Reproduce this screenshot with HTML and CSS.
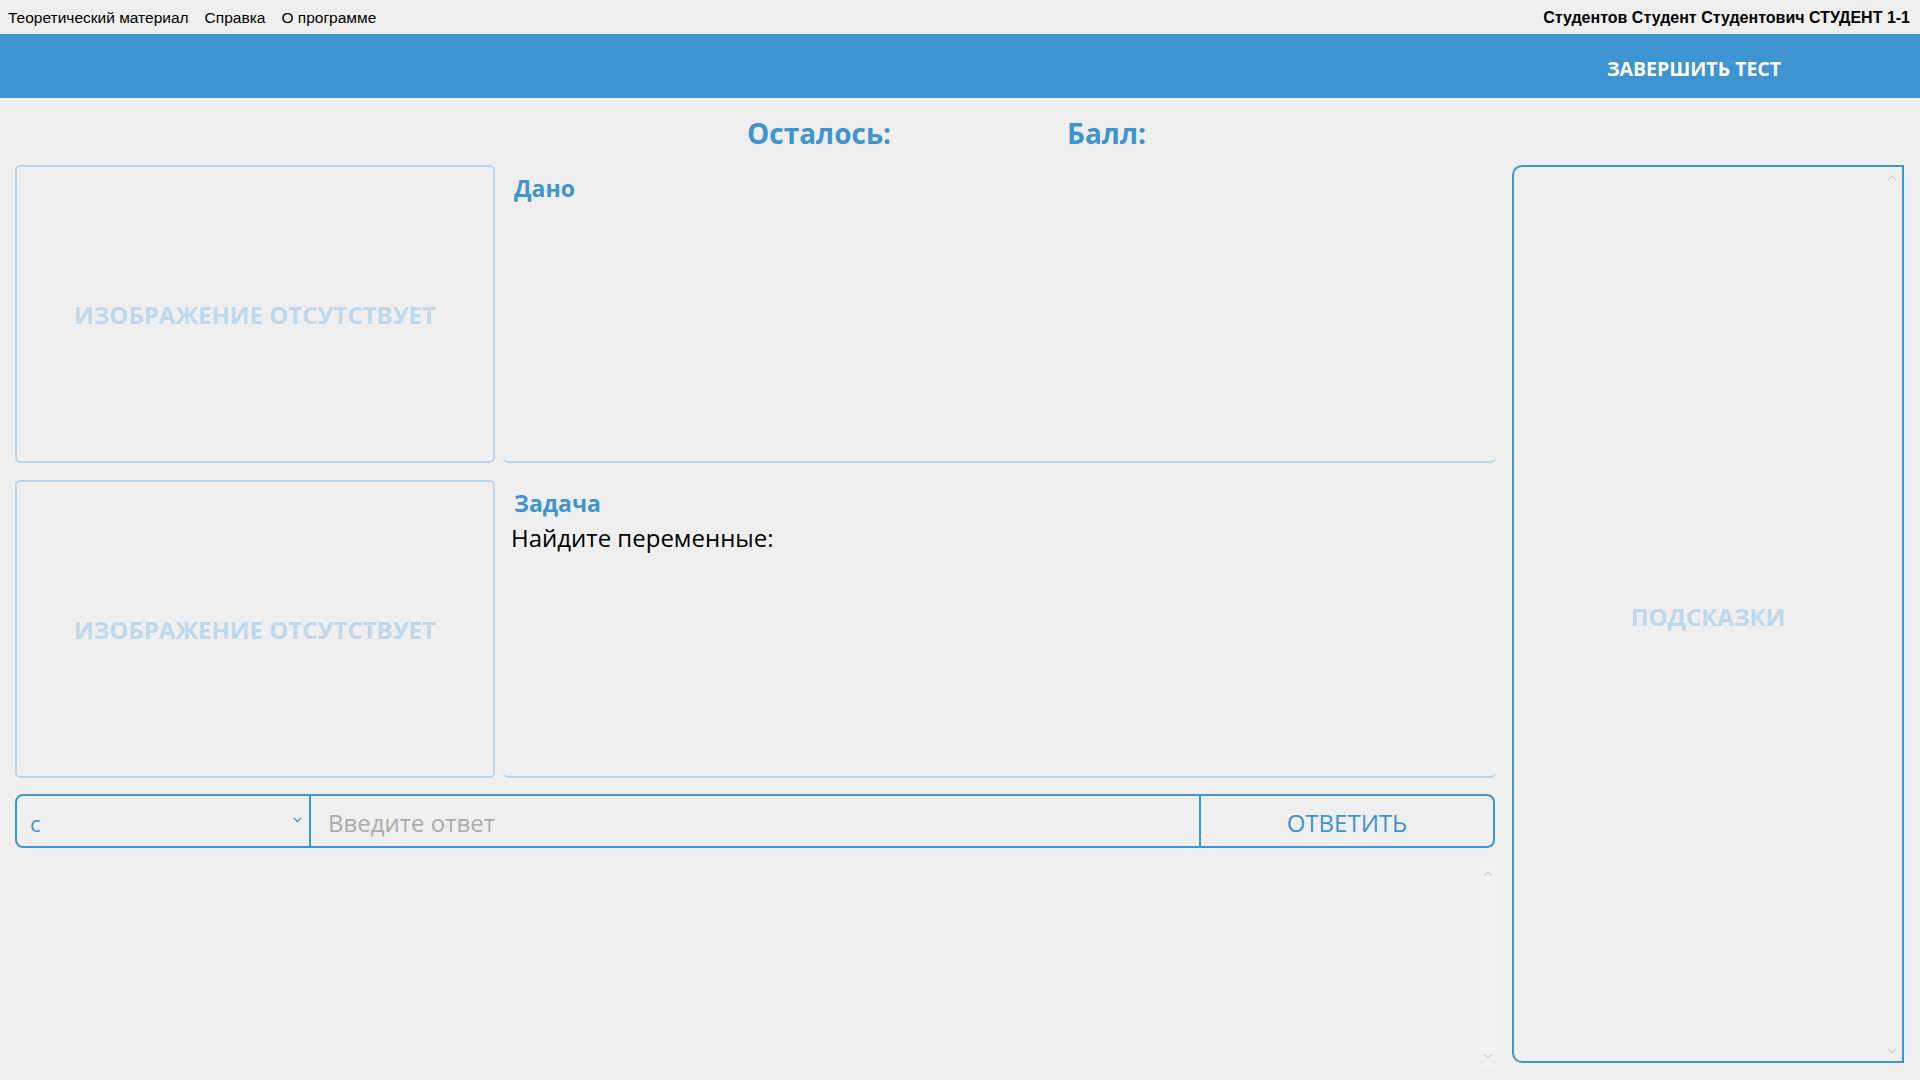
FILE: index.html
```html
<!DOCTYPE html>
<html lang="ru">
<head>
<meta charset="utf-8">
<title>Тест</title>
<link rel="stylesheet" href="styles.css">
</head>
<body>
<header class="menubar">
  <nav class="menu">
    <span class="menu-item">Теоретический материал</span>
    <span class="menu-item">Справка</span>
    <span class="menu-item">О программе</span>
  </nav>
  <div class="user">Студентов Студент Студентович СТУДЕНТ 1-1</div>
</header>
<div class="topbar">
  <button class="finish">ЗАВЕРШИТЬ ТЕСТ</button>
</div>
<div class="stats">
  <span class="stat stat-left">Осталось:</span>
  <span class="stat stat-right">Балл:</span>
</div>
<main class="workspace">
  <section class="left">
    <div class="grid">
      <div class="imgbox"><span>ИЗОБРАЖЕНИЕ ОТСУТСТВУЕТ</span></div>
      <div class="panel">
        <h2 class="panel-title">Дано</h2>
      </div>
      <div class="imgbox"><span>ИЗОБРАЖЕНИЕ ОТСУТСТВУЕТ</span></div>
      <div class="panel">
        <h2 class="panel-title">Задача</h2>
        <p class="panel-text">Найдите переменные:</p>
      </div>
    </div>
    <div class="answer">
      <div class="select">
        <span class="select-value">с</span>
        <svg class="select-arrow" width="9" height="6" viewBox="0 0 9 6"><path d="M1 1 L4.5 4.5 L8 1" fill="none" stroke="#3e94d1" stroke-width="1.3"/></svg>
      </div>
      <div class="input">Введите ответ</div>
      <button class="reply">ОТВЕТИТЬ</button>
    </div>
    <div class="history">
      <div class="scrolltrack">
        <svg width="10" height="6" viewBox="0 0 10 6"><path d="M1 5 L5 1 L9 5" fill="none" stroke="#d2d2d2" stroke-width="1.2"/></svg>
        <svg width="10" height="6" viewBox="0 0 10 6"><path d="M1 1 L5 5 L9 1" fill="none" stroke="#d2d2d2" stroke-width="1.2"/></svg>
      </div>
    </div>
  </section>
  <aside class="hints">
    <span class="hints-label">ПОДСКАЗКИ</span>
    <svg class="chev chev-up" width="10" height="6" viewBox="0 0 10 6"><path d="M1 5 L5 1 L9 5" fill="none" stroke="#d2d2d2" stroke-width="1.2"/></svg>
    <svg class="chev chev-down" width="10" height="6" viewBox="0 0 10 6"><path d="M1 1 L5 5 L9 1" fill="none" stroke="#d2d2d2" stroke-width="1.2"/></svg>
  </aside>
</main>
</body>
</html>
```
FILE: styles.css
```css
html, body {
  margin: 0;
  padding: 0;
}
body {
  width: 1920px;
  height: 1080px;
  overflow: hidden;
  background: #efefef;
  font-family: "Open Sans", "Noto Sans", sans-serif;
  color: #000;
}
.menubar {
  height: 34px;
  display: flex;
  justify-content: space-between;
  align-items: center;
  padding: 2px 10px 0 8px;
  box-sizing: border-box;
  font-family: "Liberation Sans", Arial, sans-serif;
  font-size: 15.5px;
}
.menu {
  display: flex;
  gap: 16px;
}
.user {
  font-weight: bold;
  font-size: 16px;
}
.topbar {
  height: 64px;
  background: #3e94d1;
  display: flex;
  justify-content: flex-end;
  align-items: center;
}
.finish {
  width: 260px;
  height: 64px;
  margin-right: 96px;
  background: transparent;
  border: none;
  color: #fff;
  font-family: "Open Sans", sans-serif;
  font-weight: 700;
  font-size: 19.5px;
  padding: 0;
  padding-top: 4px;
}
.stats {
  height: 67px;
  display: flex;
  align-items: center;
  padding-left: 747px;
  padding-top: 2px;
  box-sizing: border-box;
}
.stat {
  color: #3e94d1;
  font-weight: 700;
  font-size: 28px;
  line-height: 1;
}
.stat-right {
  margin-left: 176px;
}
.workspace {
  display: flex;
  align-items: flex-start;
  gap: 17px;
  padding: 0 16px 0 15px;
}
.left {
  width: 1480px;
  display: flex;
  flex-direction: column;
}
.grid {
  display: grid;
  grid-template-columns: 480px 993px;
  grid-template-rows: 298px 298px;
  column-gap: 8px;
  row-gap: 17px;
}
.imgbox {
  border: 2px solid #bad6eb;
  border-radius: 5px;
  display: flex;
  align-items: center;
  justify-content: center;
  box-sizing: border-box;
}
.imgbox span {
  color: #bfd8ec;
  font-weight: 700;
  font-size: 24px;
}
.panel {
  border-bottom: 2px solid #bad6eb;
  border-radius: 0 0 6px 6px;
  box-sizing: border-box;
  padding: 8px 0 0 8px;
}
.panel-title {
  margin: 0 0 0 3px;
  color: #3e94d1;
  font-size: 23px;
  font-weight: 700;
  line-height: 30px;
}
.panel-text {
  margin: 4px 0 0 0;
  font-size: 24px;
  line-height: 32px;
}
.answer {
  margin-top: 16px;
  height: 54px;
  display: flex;
  border: 2px solid #3e94d1;
  border-radius: 8px;
  box-sizing: border-box;
}
.select {
  width: 294px;
  border-right: 2px solid #3e94d1;
  display: flex;
  align-items: center;
  justify-content: space-between;
  padding: 4px 7px 0 13px;
  box-sizing: border-box;
}
.select-value {
  color: #3e94d1;
  font-size: 22px;
}
.select-arrow {
  margin-top: -6px;
}
.input {
  width: 890px;
  border-right: 2px solid #3e94d1;
  display: flex;
  align-items: center;
  padding: 2px 0 0 17px;
  box-sizing: border-box;
  color: #ababab;
  font-size: 24px;
}
.reply {
  flex: 1;
  background: transparent;
  border: none;
  color: #3e94d1;
  font-family: "Open Sans", sans-serif;
  font-size: 24px;
  padding: 2px 0 0 0;
}
.history {
  flex: 1;
  display: flex;
  justify-content: flex-end;
  padding-top: 15px;
  height: 204px;
}
.scrolltrack {
  width: 17px;
  height: 204px;
  background: #f1f1f1;
  display: flex;
  flex-direction: column;
  justify-content: space-between;
  align-items: center;
  padding: 8px 0 8px 0;
  box-sizing: border-box;
  margin-right: -1px;
}
.hints {
  position: relative;
  width: 392px;
  height: 898px;
  border: 2px solid #3e94d1;
  border-radius: 10px 0 0 10px;
  box-sizing: border-box;
  display: flex;
  align-items: center;
  justify-content: center;
}
.hints-label {
  color: #bfd8ec;
  font-weight: 700;
  font-size: 24px;
  margin-top: 4px;
}
.chev {
  position: absolute;
  right: 5px;
}
.chev-up {
  top: 8px;
}
.chev-down {
  bottom: 7px;
}
```
